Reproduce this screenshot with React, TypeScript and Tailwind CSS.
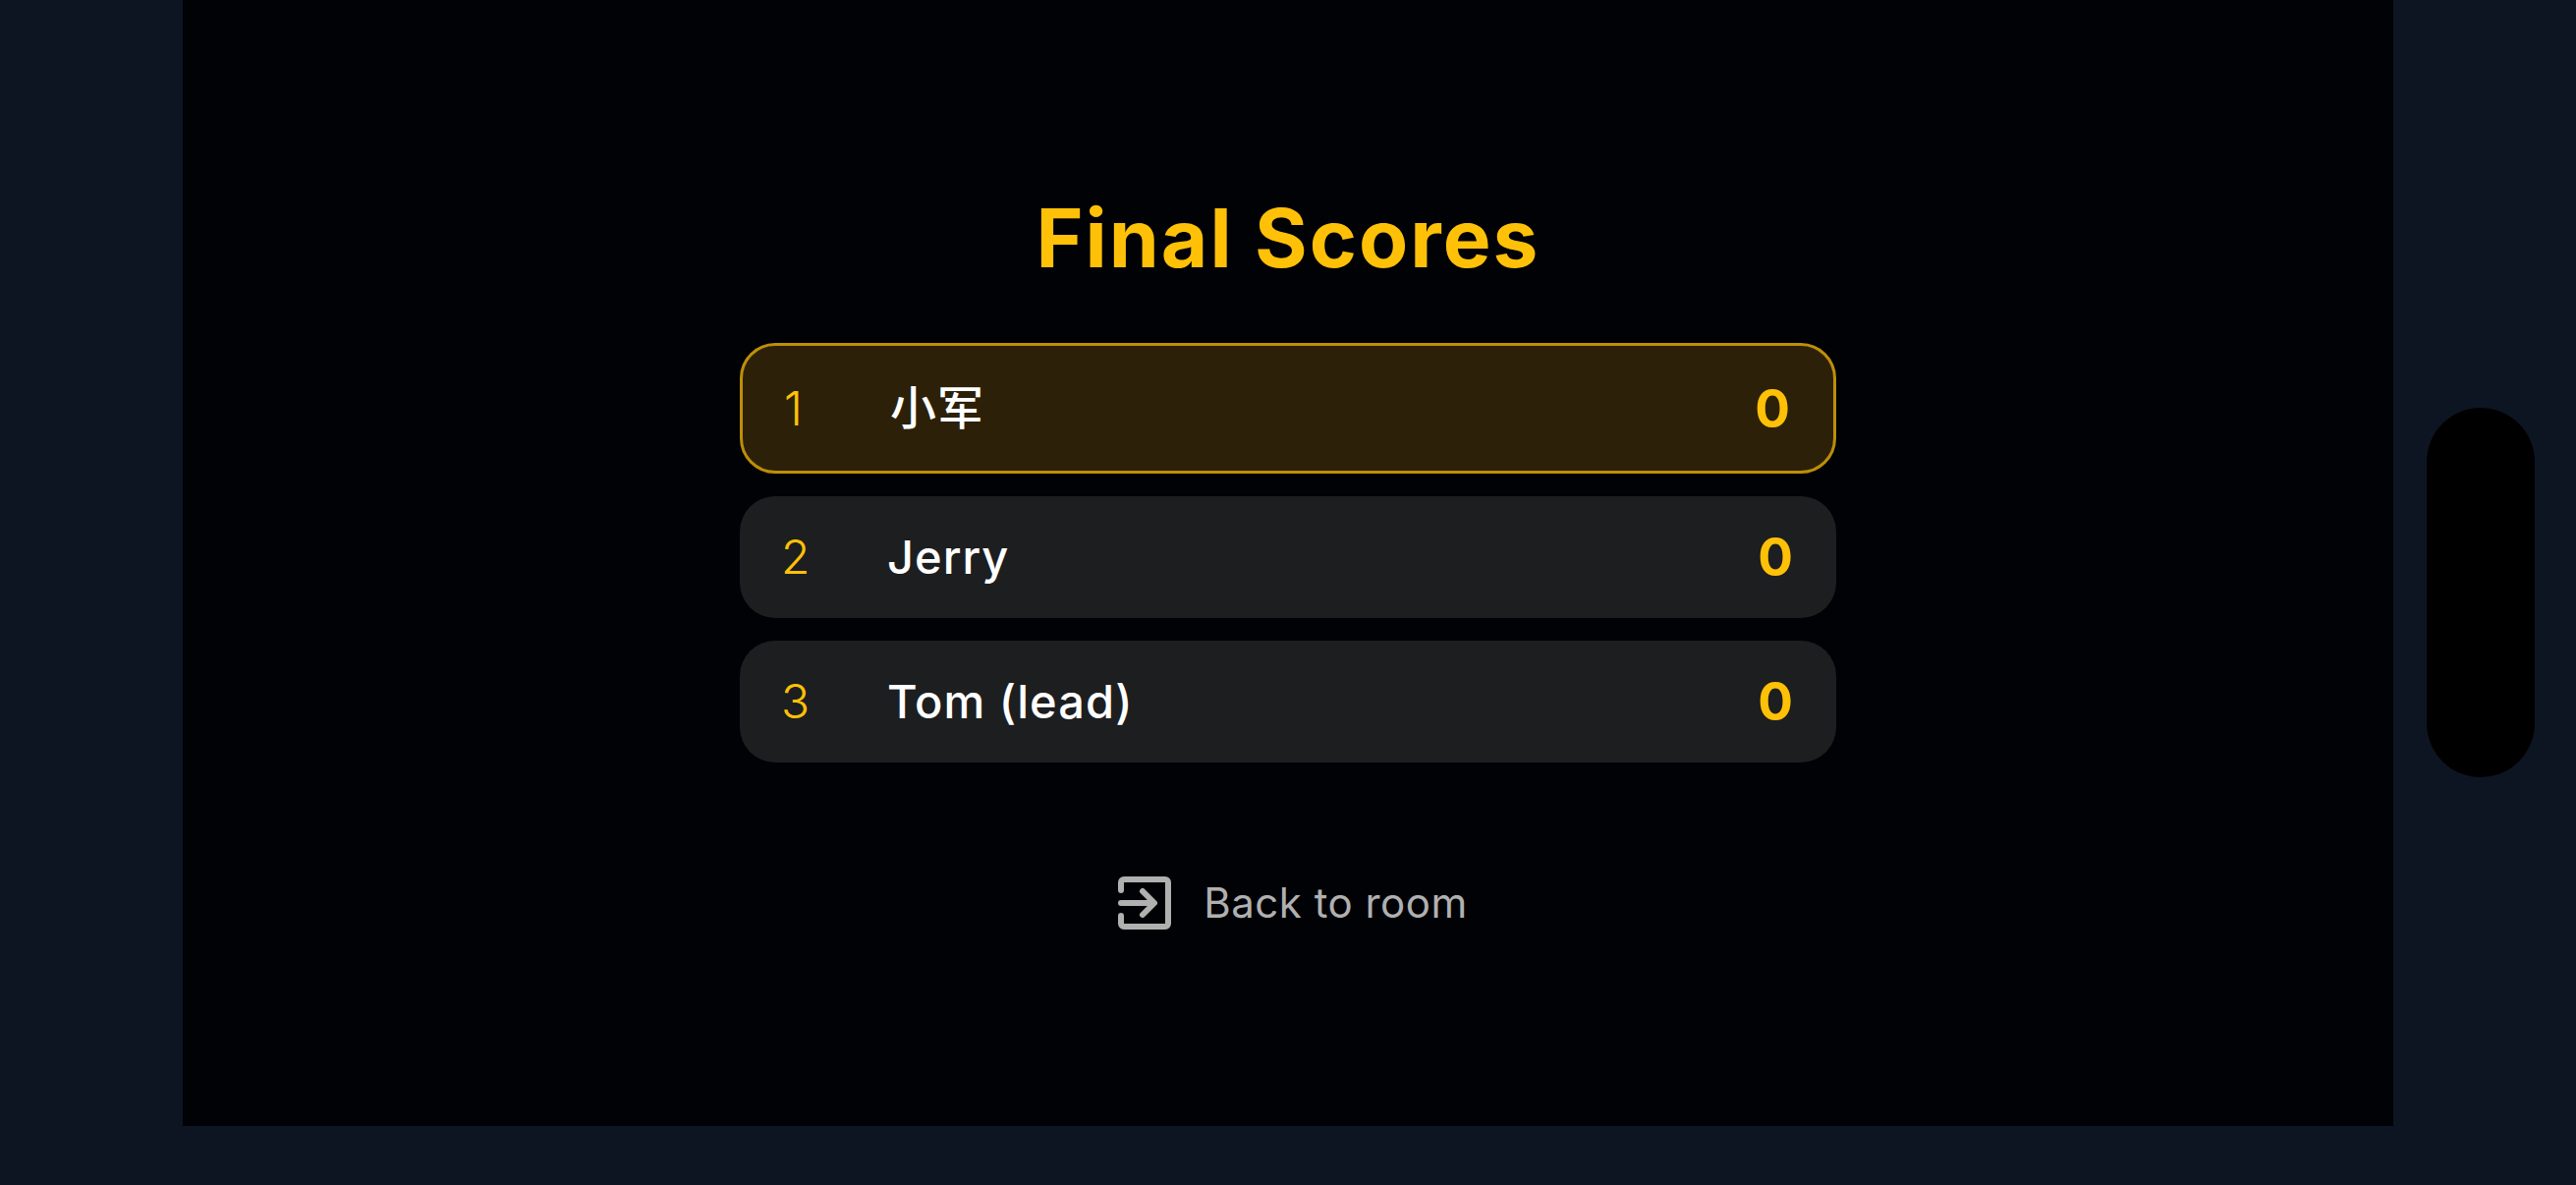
import React from "react";

const players = [
  { rank: 1, name: "小军", score: 0, top: true },
  { rank: 2, name: "Jerry", score: 0, top: false },
  { rank: 3, name: "Tom (lead)", score: 0, top: false },
];

const BackIcon = () => (
  <svg viewBox="0 0 54 54" className="w-[54px] h-[54px]" fill="none" stroke="#b0b0b0" strokeWidth="6" strokeLinecap="round" strokeLinejoin="round">
    <path d="M3 14V6a3 3 0 0 1 3-3h42a3 3 0 0 1 3 3v42a3 3 0 0 1-3 3H6a3 3 0 0 1-3-3v-8" />
    <path d="M3 27h33M25 15l12 12-12 12" />
  </svg>
);

const App: React.FC = () => {
  return (
    <div className="flex w-[2622px] h-[1206px] bg-[#0e1522] font-['Inter','Noto_Sans_CJK_SC',sans-serif] overflow-hidden">
      <div className="w-[186px] flex-shrink-0" />

      {/* Game panel */}
      <div className="w-[2250px] h-[1146px] flex-shrink-0 bg-[#010206] flex flex-col items-center pt-[195px]">
        <h1 className="text-[82px] leading-[96px] font-bold tracking-[2px] text-[#ffc107]">Final Scores</h1>

        <div className="w-[1116px] mt-[58px] flex flex-col gap-[23px]">
          {players.map(p => (
            <div
              key={p.rank}
              className={`flex items-center rounded-[36px] pl-[42px] pr-[44px] ${
                p.top ? "h-[133px] bg-[#2c2108] border-[3px] border-[#bd8e07]" : "h-[124px] bg-[#1d1e20]"
              }`}
            >
              <span className="w-[108px] text-[48px] font-light text-[#ffc107]">{p.rank}</span>
              <span className="flex-1 text-[47px] font-medium tracking-[1px] text-white">{p.name}</span>
              <span className="pt-[2px] text-[53px] font-bold text-[#ffc107]">{p.score}</span>
            </div>
          ))}
        </div>

        <button className="mt-[116px] pl-[10px] flex items-center gap-[33px] text-[42px] leading-[54px] tracking-[0.5px] text-[#b0b0b0]">
          <BackIcon />
          Back to room
        </button>
      </div>

      {/* Side handle */}
      <div className="flex-1 flex items-center pl-[34px]">
        <div className="w-[110px] h-[376px] rounded-[55px] bg-black" />
      </div>
    </div>
  );
};

export default App;
